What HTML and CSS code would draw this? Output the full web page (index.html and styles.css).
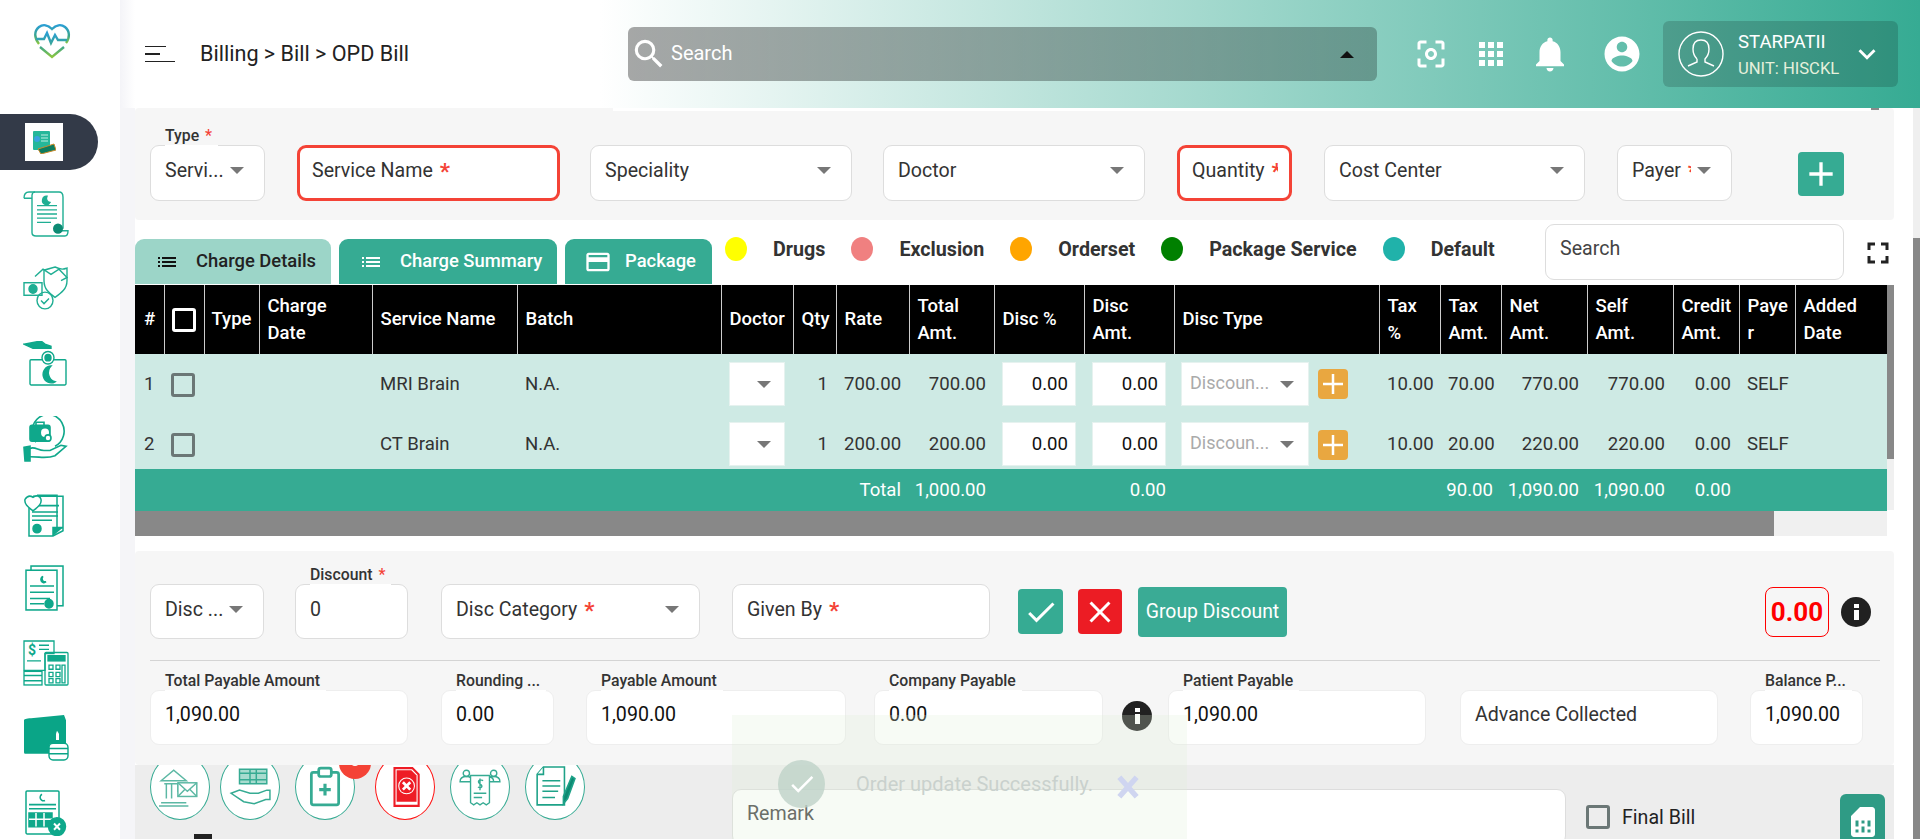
FILE: index.html
```html
<!DOCTYPE html>
<html lang="en">
<head>
<meta charset="utf-8">
<title>OPD Bill</title>
<link rel="stylesheet" href="styles.css">
</head>
<body>
<div class="app">
  <aside class="sidebar">
    <div class="logo">
      <svg width="38" height="36" viewBox="0 0 38 36" fill="none">
        <defs><linearGradient id="lg" x1="0" y1="0" x2="0" y2="1"><stop offset="0" stop-color="#2b9fd3"/><stop offset=".55" stop-color="#3aa58f"/><stop offset="1" stop-color="#8cc63f"/></linearGradient></defs>
        <path d="M6 21C1 15 1 8 6 4c4-3 9-2 13 2 4-4 9-5 13-2 5 4 5 11 1 16" stroke="url(#lg)" stroke-width="2.4"/>
        <path d="M3 16h8l3-6 4 10 4-8 3 5h9M7 24l12 10 12-10" stroke="url(#lg)" stroke-width="2.4"/>
      </svg>
    </div>
    <div class="active-item">
      <div class="active-thumb">
        <svg width="24" height="24" viewBox="0 0 24 24"><rect x="1" y="1" width="17" height="19" rx="1" fill="#25b79a"/><circle cx="5" cy="9" r="3" fill="#3aa2e0"/><path d="M9 5h7M9 8h7M9 11h7" stroke="#bfeee3"/><path d="M6 19l16-5 2 6-15 4z" fill="#0d7c5f" stroke="#c98a2b"/></svg>
      </div>
    </div>
    <div class="nav">
      <svg class="ico" preserveAspectRatio="none" viewBox="0 0 46 44" fill="none" stroke="#1fae93" stroke-width="1.4"><path d="M1 7c0-4 2-6 5-6h30c3 0 4 2 4 5v30"/><path d="M1 7h8V4c0-2 2-3 3-3M9 7v33c0 2 2 3 4 3h29c2 0 3-2 3-5H31"/><path d="M14 14h20M14 18h20M14 22h20M14 26h20M14 30h14" stroke-width="1.2"/><path d="M24 5a4 4 0 1 0 3 6 4 4 0 0 1-3-6z" fill="#1fae93"/><circle cx="35" cy="36" r="5" fill="#0d8a73" stroke="none"/></svg>
      <svg class="ico" preserveAspectRatio="none" viewBox="0 0 46 44" fill="none" stroke="#1fae93" stroke-width="1.4"><rect x="1" y="16" width="18" height="12"/><circle cx="10" cy="22" r="4" fill="#1fae93"/><path d="M12 10l8-7 8 5 8-5 8 8-6 3"/><path d="M32 1c7 3 9 2 12 1v12c0 8-6 12-12 16-6-4-11-8-11-16V4z"/><circle cx="22" cy="33" r="8"/><path d="M18 33l3 3 5-5"/></svg>
      <svg class="ico" preserveAspectRatio="none" viewBox="0 0 46 44" fill="none" stroke="#0fa88b" stroke-width="1.4"><path d="M1 3l17-3 4 3 6 2v2H10z" fill="#0fa88b"/><rect x="7" y="18" width="36" height="24" rx="1"/><circle cx="25" cy="16" r="6" fill="#fff"/><circle cx="25" cy="16" r="3" fill="#0fa88b"/><path d="M28 24a8 8 0 1 0 4 15 9 9 0 0 1-4-15z" fill="#0fa88b"/></svg>
      <svg class="ico" preserveAspectRatio="none" viewBox="0 0 46 44" fill="none" stroke="#0fa88b" stroke-width="1.6"><path d="M13 25A16 16 0 1 1 32 29"/><rect x="7" y="9" width="20" height="15" rx="2" fill="#0fa88b"/><path d="M13 9V6h8v3"/><circle cx="22" cy="16" r="4" fill="#fff" stroke="none"/><circle cx="25" cy="21" r="3" fill="#fff"/><path d="M1 30l6-1v14H2z" fill="#0fa88b"/><path d="M7 31c5-2 8 2 14 2h6l11-5 5 1-11 9c-8 3-14 1-25 1"/></svg>
      <svg class="ico" preserveAspectRatio="none" viewBox="0 0 46 44" fill="none" stroke="#0fa88b" stroke-width="1.5"><path d="M10 5h30v33l-10 5H6V16"/><path d="M30 43v-8h10"  fill="#0fa88b"/><path d="M14 4h20v32" /><path d="M16 14h20M9 20h26M9 24h26M9 28h20"/><path d="M2 8c2-3 5-4 8-2 3-2 7-2 8 2 1 5-4 8-8 11-4-3-9-6-8-11z" fill="#fff"/><circle cx="14" cy="36" r="4" fill="#0fa88b"/></svg>
      <svg class="ico" preserveAspectRatio="none" viewBox="0 0 46 44" fill="none" stroke="#0fa88b" stroke-width="1.5"><rect x="8" y="1" width="32" height="38"/><rect x="3" y="5" width="31" height="38" fill="#fff"/><path d="M20 11a3 3 0 1 0 3 5 3 3 0 0 1-3-5z" fill="#0fa88b"/><path d="M7 20h24M7 26h24M7 32h20M7 37h14"/><circle cx="26" cy="37" r="4" fill="#0fa88b"/></svg>
      <svg class="ico" preserveAspectRatio="none" viewBox="0 0 46 44" fill="none" stroke="#0fa88b" stroke-width="1.3"><path d="M1 1h30v12H22v16H1z"/><text x="5" y="14" class="dollar">$</text><path d="M16 5h10M16 9h10M4 20h14"/><rect x="1" y="30" width="18" height="13"/><path d="M1 34h18M1 39h18"/><rect x="22" y="12" width="23" height="31" rx="1"/><rect x="25" y="15" width="17" height="5" fill="#0fa88b"/><path d="M26 24h4v4h-4zM33 24h4v4h-4zM26 31h4v4h-4zM33 31h4v4h-4zM26 37h4v4h-4zM33 37h4v4h-4zM39 24h3v17h-3z"/></svg>
      <svg class="ico" preserveAspectRatio="none" viewBox="0 0 46 44"><path d="M8 3l33-3 2 5v24c-9 0-13 3-13 8H2c-1 0-1-1-1-2V5c0-1 2-2 7-2z" fill="#0aa587"/><path d="M34 15l2 3v6h-3v-6z" fill="#fff"/><rect x="26" y="27" width="19" height="16" rx="4" fill="#fff" stroke="#0aa587" stroke-width="1.4"/><path d="M26 32h19M26 37h19" stroke="#0aa587" stroke-width="1.4"/></svg>
      <svg class="ico" preserveAspectRatio="none" viewBox="0 0 46 44" fill="none" stroke="#0fa88b" stroke-width="1.5"><rect x="3" y="1" width="33" height="41" rx="1"/><path d="M19 4a3 3 0 1 0 3 6 3 3 0 0 1-3-6z" fill="#0fa88b"/><path d="M6 14h27M6 18h27"/><path d="M6 22h23v13H6z" fill="#0fa88b"/><path d="M13 22v13M21 22v13M6 28h23" stroke="#fff"/><circle cx="34" cy="35" r="8.5" fill="#0fa88b"/><path d="M31 32l6 6M37 32l-6 6" stroke="#fff" stroke-width="2"/></svg>
    </div>
  </aside>

  <main class="main">
    <header class="topbar">
      <div class="burger"><span class="b1"></span><span class="b2"></span><span class="b3"></span></div>
      <div class="crumb">Billing &gt; Bill &gt; OPD Bill</div>
      <div class="topsearch">
        <svg class="i28" viewBox="0 0 24 24" fill="#fff"><path d="M15.5 14h-.79l-.28-.27A6.471 6.471 0 0 0 16 9.5 6.5 6.5 0 1 0 9.5 16c1.61 0 3.09-.59 4.23-1.57l.27.28v.79l5 4.99L20.49 19l-4.99-5zm-6 0C7.01 14 5 11.99 5 9.5S7.01 5 9.5 5 14 7.01 14 9.5 11.99 14 9.5 14z"/></svg>
        <span class="ts-text">Search</span>
        <span class="uparrow"></span>
      </div>
      <svg class="tico t1" viewBox="0 0 24 24" fill="#fff"><path d="M5 15H3v4c0 1.1.9 2 2 2h4v-2H5v-4zM5 5h4V3H5c-1.1 0-2 .9-2 2v4h2V5zm14-2h-4v2h4v4h2V5c0-1.1-.9-2-2-2zm0 16h-4v2h4c1.1 0 2-.9 2-2v-4h-2v4zM12 8c-2.21 0-4 1.79-4 4s1.79 4 4 4 4-1.79 4-4-1.79-4-4-4zm0 6c-1.1 0-2-.9-2-2s.9-2 2-2 2 .9 2 2-.9 2-2 2z"/></svg>
      <svg class="tico t2" viewBox="0 0 24 24" fill="#fff"><path d="M4 8h4V4H4v4zm6 12h4v-4h-4v4zm-6 0h4v-4H4v4zm0-6h4v-4H4v4zm6 0h4v-4h-4v4zm6-10v4h4V4h-4zm-6 4h4V4h-4v4zm6 6h4v-4h-4v4zm0 6h4v-4h-4v4z"/></svg>
      <svg class="tico t3" viewBox="0 0 24 24" fill="#fff"><path d="M12 22c1.1 0 2-.9 2-2h-4c0 1.1.89 2 2 2zm6-6v-5c0-3.07-1.64-5.64-4.5-6.32V4c0-.83-.67-1.5-1.5-1.5s-1.5.67-1.5 1.5v.68C7.63 5.36 6 7.92 6 11v5l-2 2v1h16v-1l-2-2z"/></svg>
      <svg class="tico t4" viewBox="0 0 24 24" fill="#fff"><path d="M12 2C6.48 2 2 6.48 2 12s4.48 10 10 10 10-4.48 10-10S17.52 2 12 2zm0 3c1.66 0 3 1.34 3 3s-1.34 3-3 3-3-1.34-3-3 1.34-3 3-3zm0 14.2c-2.5 0-4.71-1.28-6-3.22.03-1.99 4-3.08 6-3.08 1.99 0 5.97 1.09 6 3.08-1.29 1.94-3.5 3.22-6 3.22z"/></svg>
      <div class="user">
        <svg class="avatar" viewBox="0 0 46 46" fill="none" stroke="#fff" stroke-width="1.4"><circle cx="23" cy="23" r="22"/><path d="M15 18c0-6 3-9 8-9s8 3 8 9c0 4-2 8-4 10v3l9 4M19 28c-2-2-4-6-4-10M19 28v3l-9 4"/></svg>
        <div class="user-txt"><div class="uname">STARPATII</div><div class="uunit">UNIT: HISCKL</div></div>
        <svg class="chev" viewBox="0 0 24 24" fill="#fff"><path d="M16.59 8.59L12 13.17 7.41 8.59 6 10l6 6 6-6z"/></svg>
      </div>
    </header>

    <div class="content">
      <section class="panel form-panel">
        <span class="strip"></span><span class="strip-thumb"></span>
        <div class="field w115"><span class="lbl">Type <b>*</b></span><span class="val">Servi...</span><span class="arrow"></span></div>
        <div class="field red w263 g32"><span class="val">Service Name <b>*</b></span></div>
        <div class="field w262 g30"><span class="val">Speciality</span><span class="arrow"></span></div>
        <div class="field w262 g31"><span class="val">Doctor</span><span class="arrow"></span></div>
        <div class="field red w115 g32"><span class="val clip">Quantity <b>*</b></span></div>
        <div class="field w261 g32"><span class="val">Cost Center</span><span class="arrow"></span></div>
        <div class="field w115 g32"><span class="val clip">Payer <b>*</b></span><span class="arrow"></span></div>
        <button class="sq add"><svg viewBox="0 0 24 24" fill="#fff"><path d="M19 13h-6v6h-2v-6H5v-2h6V5h2v6h6v2z"/></svg></button>
      </section>

      <section class="toolbar">
        <div class="tabs">
          <div class="tab tab-on"><svg viewBox="0 0 24 24" fill="#111"><path d="M3 13h2v-2H3v2zm0 4h2v-2H3v2zm0-8h2V7H3v2zm4 4h14v-2H7v2zm0 4h14v-2H7v2zM7 7v2h14V7H7z"/></svg><span>Charge Details</span></div>
          <div class="tab"><svg viewBox="0 0 24 24" fill="#fff"><path d="M3 13h2v-2H3v2zm0 4h2v-2H3v2zm0-8h2V7H3v2zm4 4h14v-2H7v2zm0 4h14v-2H7v2zM7 7v2h14V7H7z"/></svg><span>Charge Summary</span></div>
          <div class="tab"><svg class="pk" viewBox="0 0 24 24" fill="#fff"><path d="M20 4H4c-1.11 0-1.99.89-1.99 2L2 18c0 1.11.89 2 2 2h16c1.11 0 2-.89 2-2V6c0-1.11-.89-2-2-2zm0 14H4v-6h16v6zm0-10H4V6h16v2z"/></svg><span>Package</span></div>
        </div>
        <div class="legend">
          <i class="dot d-y"></i><span>Drugs</span>
          <i class="dot d-p"></i><span>Exclusion</span>
          <i class="dot d-o"></i><span>Orderset</span>
          <i class="dot d-g"></i><span>Package Service</span>
          <i class="dot d-t"></i><span>Default</span>
        </div>
        <div class="field tsearch"><span class="val">Search</span></div>
        <svg class="fs" viewBox="0 0 24 24" fill="#222"><path d="M7 14H5v5h5v-2H7v-3zm-2-4h2V7h3V5H5v5zm12 7h-3v2h5v-5h-2v3zM14 5v2h3v3h2V5h-5z"/></svg>
      </section>

      <section class="grid-wrap">
        <div class="grid-view">
          <table class="grid">
            <colgroup>
              <col class="c29"><col class="c40"><col class="c55"><col class="c113"><col class="c145"><col class="c204"><col class="c72"><col class="c43"><col class="c73"><col class="c85"><col class="c90"><col class="c90"><col class="c205"><col class="c61"><col class="c61"><col class="c86"><col class="c86"><col class="c66"><col class="c56"><col class="c92">
            </colgroup>
            <thead>
              <tr>
                <th>#</th><th><span class="chk chk-w"></span></th><th class="th-type">Type</th><th>Charge Date</th><th>Service Name</th><th>Batch</th><th>Doctor</th><th>Qty</th><th>Rate</th><th>Total Amt.</th><th>Disc %</th><th>Disc Amt.</th><th>Disc Type</th><th>Tax<br>%</th><th>Tax Amt.</th><th>Net Amt.</th><th>Self Amt.</th><th>Credit Amt.</th><th class="brk">Payer</th><th>Added Date</th>
              </tr>
            </thead>
            <tbody>
              <tr class="r1">
                <td>1</td><td><span class="chk"></span></td><td></td><td></td><td>MRI Brain</td><td>N.A.</td>
                <td class="ci"><div class="cbox sel"><span class="arrow"></span></div></td>
                <td class="n">1</td><td class="n">700.00</td><td class="n">700.00</td>
                <td class="ci"><div class="cbox num">0.00</div></td><td class="ci"><div class="cbox num">0.00</div></td>
                <td class="ci"><div class="dt"><div class="cbox dsel"><span class="ph">Discoun...</span><span class="arrow"></span></div><span class="plus"><svg viewBox="0 0 24 24" fill="#fff"><path d="M20 13h-7v7h-2v-7H4v-2h7V4h2v7h7v2z"/></svg></span></div></td>
                <td class="n">10.00</td><td class="n">70.00</td><td class="n">770.00</td><td class="n">770.00</td><td class="n">0.00</td><td>SELF</td><td></td>
              </tr>
              <tr class="r2">
                <td>2</td><td><span class="chk"></span></td><td></td><td></td><td>CT Brain</td><td>N.A.</td>
                <td class="ci"><div class="cbox sel"><span class="arrow"></span></div></td>
                <td class="n">1</td><td class="n">200.00</td><td class="n">200.00</td>
                <td class="ci"><div class="cbox num">0.00</div></td><td class="ci"><div class="cbox num">0.00</div></td>
                <td class="ci"><div class="dt"><div class="cbox dsel"><span class="ph">Discoun...</span><span class="arrow"></span></div><span class="plus"><svg viewBox="0 0 24 24" fill="#fff"><path d="M20 13h-7v7h-2v-7H4v-2h7V4h2v7h7v2z"/></svg></span></div></td>
                <td class="n">10.00</td><td class="n">20.00</td><td class="n">220.00</td><td class="n">220.00</td><td class="n">0.00</td><td>SELF</td><td></td>
              </tr>
              <tr class="tot">
                <td colspan="8"></td><td class="n">Total</td><td class="n">1,000.00</td><td></td><td class="n">0.00</td><td></td><td></td><td class="n">90.00</td><td class="n">1,090.00</td><td class="n">1,090.00</td><td class="n">0.00</td><td></td><td></td>
              </tr>
            </tbody>
          </table>
          <div class="vbar"><span></span></div>
        </div>
        <div class="hbar"><span></span></div>
      </section>

      <section class="panel lower">
        <div class="row row1">
          <div class="field w114"><span class="val">Disc ...</span><span class="arrow"></span></div>
          <div class="field w113 g31"><span class="lbl">Discount <b>*</b></span><span class="val">0</span></div>
          <div class="field w259 g33"><span class="val">Disc Category <b>*</b></span><span class="arrow"></span></div>
          <div class="field w258 g32"><span class="val">Given By <b>*</b></span></div>
          <button class="sq ok"><svg viewBox="0 0 24 24" fill="#fff"><path d="M9 16.17L4.83 12l-1.42 1.41L9 19 21 7l-1.41-1.41z"/></svg></button>
          <button class="sq no"><svg viewBox="0 0 24 24" fill="#fff"><path d="M19 6.41L17.59 5 12 10.59 6.41 5 5 6.41 10.59 12 5 17.59 6.41 19 12 13.41 17.59 19 19 17.59 13.41 12z"/></svg></button>
          <button class="group">Group Discount</button>
          <div class="redbox">0.00</div>
          <span class="info"><i></i></span>
        </div>
        <div class="divider"></div>
        <div class="row row2">
          <div class="field soft w258"><span class="lbl">Total Payable Amount</span><span class="val dark">1,090.00</span></div>
          <div class="field soft w113 g33"><span class="lbl">Rounding ...</span><span class="val dark">0.00</span></div>
          <div class="field soft w260 g32"><span class="lbl">Payable Amount</span><span class="val dark">1,090.00</span></div>
          <div class="field soft w229 g28"><span class="lbl">Company Payable</span><span class="val dark">0.00</span></div>
          <span class="info inf2"><i></i></span>
          <div class="field soft w258 g16"><span class="lbl">Patient Payable</span><span class="val dark">1,090.00</span></div>
          <div class="field soft w258 g34"><span class="val">Advance Collected</span></div>
          <div class="field soft w113 g32"><span class="lbl">Balance P...</span><span class="val dark">1,090.00</span></div>
        </div>
      </section>

      <section class="bottom">
        <div class="acts">
          <div class="circles">
            <span class="circle"><svg viewBox="0 0 40 40" fill="none" stroke="#5cb8a4" stroke-width="1.4"><path d="M2 14L14 4l12 10zM5 17h18M7 17v14M12 17v14M18 17v8M2 35h24M0 38h28"/><rect x="18" y="16" width="18" height="13" fill="#fff"/><path d="M18 16l9 8 9-8M18 29l7-7M36 29l-7-7"/></svg></span>
            <span class="circle c2"><svg viewBox="0 0 40 40" fill="none" stroke="#36ab93" stroke-width="1.4"><path d="M10 3h26v14H10z" fill="#a8dccf"/><path d="M20 3v14M26 3v14M10 7h26M10 13h26"/><path d="M2 26l8-3 10 3h8l8-3h3v9h-4l-11 4-10-2-12-8z" fill="#fff"/></svg></span>
            <span class="circle c3"><svg viewBox="0 0 40 40" fill="none" stroke="#36ab93" stroke-width="2.6"><rect x="7" y="6" width="26" height="31" rx="2"/><rect x="14" y="2" width="12" height="8" rx="2" fill="#fff"/><path d="M20 17v11M14.500 22.500h11" stroke-width="3"/></svg><em class="badge"></em></span>
            <span class="circle c4 cred"><svg viewBox="0 0 40 40" fill="none"><path d="M10 2h17l6 6v30H10z" fill="#fff" stroke="#ee1c25" stroke-width="2"/><path d="M12 4h14l5 5v25H12z" fill="#ee1c25"/><circle cx="21.500" cy="19" r="8" fill="#fff"/><circle cx="21.500" cy="19" r="7" fill="#ee1c25"/><path d="M18 15.500l7 7M25 15.500l-7 7" stroke="#fff" stroke-width="2.6"/></svg></span>
            <span class="circle c5"><svg viewBox="0 0 40 40" fill="none" stroke="#36ab93" stroke-width="1.3"><circle cx="7" cy="7" r="3"/><path d="M1 15c0-4 3-5 6-5s6 1 6 5zM33 15c0-4-3-5-6-5"/><circle cx="33" cy="7" r="3"/><path d="M27 15c0-4 3-5 6-5s6 1 6 5z"/><path d="M11 9h18v26l-3 2-3-2-3 2-3-2-3 2-3-2z" fill="#fff"/><path d="M14 26h12M14 30h8"/><path d="M23 14c-4-2-6 1-3 3s2 5-2 3M20 12v11"/></svg></span>
            <span class="circle c6"><svg viewBox="0 0 40 40" fill="none" stroke="#1ea288" stroke-width="1.5"><path d="M9 1h20v36H3V8z"/><path d="M9 1v7H3" fill="#fff"/><path d="M8 14h17M8 19h17M8 24h15M8 30h12"/><path d="M36 10l3 2-7 19-4 5 0-7z" fill="#0d8a73"/></svg></span>
          </div>
          <span class="stub"></span>
        </div>
        <div class="field remark"><span class="val">Remark</span></div>
        <label class="final"><span class="chk"></span><span>Final Bill</span></label>
        <button class="sq sim"><svg viewBox="0 0 24 24" fill="#fff"><path d="M19.99 4c0-1.1-.89-2-1.99-2h-8L4 8v12c0 1.1.9 2 2 2h12c1.1 0 2-.9 2-2l-.01-16zM9 19H7v-2h2v2zm8 0h-2v-2h2v2zm-8-4H7v-4h2v4zm4 4h-2v-4h2v4zm0-6h-2v-2h2v2zm4 2h-2v-4h2v4z"/></svg></button>
      </section>
    </div>
  </main>
</div>

<div class="pagebar"><span></span></div>

<div class="toast">
  <span class="t-ok"><svg viewBox="0 0 24 24" fill="#fff"><path d="M9 16.17L4.83 12l-1.42 1.41L9 19 21 7l-1.41-1.41z"/></svg></span>
  <span class="t-msg">Order update Successfully.</span>
  <svg class="t-x" viewBox="0 0 24 24" fill="none" stroke="#cfd5f0" stroke-width="5"><path d="M4 3l16 18M20 3L4 21"/></svg>
</div>
</body>
</html>
```
FILE: styles.css
```css
* { box-sizing: border-box; }
html, body { margin: 0; height: 839px; overflow: hidden; background: #fff; }
body { font-family: Roboto, "Liberation Sans", sans-serif; font-size: 19.6px; color: #333; position: relative; }
button { font-family: inherit; border: 0; padding: 0; }
.app { display: flex; height: 839px; }

/* sidebar */
.sidebar { width: 120px; flex: none; background: #fff; }
.logo { height: 114px; padding: 23px 0 0 33px; }
.logo svg { display: block; }
.active-item { width: 98px; height: 56px; background: #333a48; border-radius: 0 28px 28px 0; padding: 9px 0 0 25px; }
.active-thumb { width: 38px; height: 38px; background: #fff; display: flex; align-items: center; justify-content: center; }
.nav { display: flex; flex-direction: column; gap: 28.9px; padding: 21px 0 0 23px; }
.ico { width: 46px; height: 46px; flex: none; display: block; }
.dollar { font: 700 14px Roboto, sans-serif; fill: #0fa88b; stroke: none; }

/* main */
.main { flex: 1; min-width: 0; }
.topbar { height: 108px; display: flex; align-items: center; background: linear-gradient(to right, #f4f4f8, #fff 15px, #fff 480px, #36ab93 100%); }
.burger { width: 30px; margin-left: 25px; display: flex; flex-direction: column; gap: 6px; }
.burger span { display: block; background: #222; }
.b1 { width: 21px; height: 1px; }
.b2 { width: 15px; height: 2px; }
.b3 { width: 30px; height: 1px; }
.crumb { width: 428px; margin-left: 25px; font-size: 21.6px; color: #222; margin-top: -2px; }
.topsearch { width: 749px; height: 54px; border-radius: 6px; background: linear-gradient(to right, rgba(0,0,0,.34), rgba(0,0,0,.26)); display: flex; align-items: center; padding-left: 2px; }
.i28 { width: 38px; height: 38px; flex: none; }
.ts-text { color: #fff; margin-left: 3px; flex: 1; font-size: 20px; margin-top: -2px; }
.uparrow { width: 0; height: 0; border: 7px solid transparent; border-top: 0; border-bottom: 7px solid #111; margin-right: 23px; }
.tico { flex: none; height: 36px; width: 36px; }
.t1 { margin-left: 36px; }
.t2 { margin-left: 24px; }
.t3 { margin-left: 20px; height: 42px; width: 42px; }
.t4 { margin-left: 30px; height: 42px; width: 42px; }
.user { width: 235px; height: 66px; margin-left: 20px; border-radius: 6px; background: rgba(0,0,0,.16); display: flex; align-items: center; padding-left: 15px; }
.avatar { width: 46px; height: 46px; flex: none; }
.user-txt { margin-left: 14px; width: 112px; flex: none; }
.uname { color: #fff; font-size: 18.6px; line-height: 22px; margin-bottom: 7px; white-space: nowrap; }
.uunit { color: #e6f0dc; font-size: 16.6px; line-height: 18px; white-space: nowrap; }
.chev { width: 34px; height: 34px; margin-left: 0; flex: none; }

.content { border-left: 15px solid #f5f5f8; width: 1774px; height: 731px; position: relative; }
.panel { background: #f6f6f6; border-radius: 4px; }
.form-panel { height: 112px; display: flex; align-items: flex-start; padding: 37px 0 0 15px; position: relative; }
.strip { position: absolute; left: 478px; top: 0; width: 1258px; height: 3px; background: #fff; }
.strip-thumb { position: absolute; left: 1736px; top: 0; width: 8px; height: 2px; background: #8a8a8a; }

/* fields */
.field { position: relative; height: 56px; background: #fff; border: 1px solid #ddd; border-radius: 9px; padding: 13px 20px 0 14px; display: flex; align-items: flex-start; flex: none; line-height: 24px; white-space: nowrap; }
.field.red { border: 3px solid #f44336; padding: 11px 11px 0 12px; }
.field.soft { border-color: #eee; padding-top: 12px; height: 55px; }
.field b { color: #f44336; font-weight: 700; font-size: 1.15em; line-height: 20px; margin-left: 2px; vertical-align: -2px; }
.val { flex: 1; min-width: 0; color: #333; }
.val.clip { overflow: hidden; }
.val.dark { color: #111; }
.arrow { flex: none; width: 0; height: 0; border: 7px solid transparent; border-bottom: 0; border-top: 7px solid #777; margin-top: 8px; margin-left: 6px; }
.lbl { position: absolute; left: 14px; top: -19px; font-size: 15.8px; font-weight: 500; line-height: 18px; color: #333; background: linear-gradient(to bottom, transparent 18px, #fff 18px); padding-right: 6px; padding-bottom: 1px; }
.field .lbl b { font-weight: 500; font-size: 1em; vertical-align: baseline; line-height: 18px; }
.w113 { width: 113px; } .w114 { width: 114px; } .w115 { width: 115px; }
.w229 { width: 229px; } .w258 { width: 258px; } .w259 { width: 259px; } .w260 { width: 260px; }
.w261 { width: 261px; } .w262 { width: 262px; } .w263 { width: 263px; }
.g16 { margin-left: 16px; } .g28 { margin-left: 28px; } .g30 { margin-left: 30px; } .g31 { margin-left: 31px; } .g32 { margin-left: 32px; } .g33 { margin-left: 33px; } .g34 { margin-left: 34px; }

.sq { flex: none; border-radius: 4px; display: flex; align-items: center; justify-content: center; background: #36ab93; }
.add { width: 46px; height: 44px; margin: 7px 0 0 66px; }
.add svg { width: 40px; height: 40px; }

/* toolbar */
.toolbar { height: 65px; display: flex; align-items: flex-start; }
.tabs { display: flex; gap: 8px; margin-top: 19px; }
.tab { height: 45px; display: flex; align-items: center; padding-left: 20px; background: #36ab93; border-radius: 9px 9px 0 0; color: #fff; font-weight: 500; font-size: 18.4px; }
.tab svg { width: 24px; height: 24px; flex: none; }
.tab span { margin-left: 17px; white-space: nowrap; margin-top: -2px; }
.tab:nth-child(1) { width: 196px; }
.tab:nth-child(2) { width: 218px; }
.tab:nth-child(3) { width: 147px; }
.tab-on { background: #9cd5c8; color: #222; }
.tab svg.pk { width: 28px; height: 28px; margin-left: -1px; }
.tab svg.pk + span { margin-left: 13px; }
.legend { display: flex; align-items: center; gap: 26px; margin: 17px 0 0 13px; height: 24px; font-weight: 700; font-size: 19.7px; color: #333; white-space: nowrap; }
.dot { width: 22px; height: 24px; border-radius: 50%; flex: none; }
.d-y { background: #ffff00; } .d-p { background: #f08080; } .d-o { background: #ffa500; } .d-g { background: #008000; } .d-t { background: #20b2aa; }
.tsearch { width: 299px; height: 56px; margin: 4px 0 0 auto; padding-top: 12px; }
.tsearch .val { color: #444; }
.fs { width: 36px; height: 36px; margin: 15px -2px 0 16px; flex: none; }

/* grid */
.grid-wrap { height: 251px; }
.grid-view { display: flex; height: 226px; overflow: hidden; }
.grid { width: 1752px; flex: none; table-layout: fixed; border-collapse: collapse; font-size: 18.6px; color: #333; }
.c29{width:29px}.c40{width:40px}.c55{width:55px}.c113{width:113px}.c145{width:145px}.c204{width:204px}.c72{width:72px}.c43{width:43px}.c73{width:73px}.c85{width:85px}.c90{width:90px}.c205{width:205px}.c61{width:61px}.c86{width:86px}.c66{width:66px}.c56{width:56px}.c92{width:92px}
.grid th { height: 69px; background: #000; color: #fff; font-weight: 500; font-size: 18.5px; line-height: 27px; text-align: left; padding: 0 4px 0 8px; border-right: 1px solid #ccc; }
.grid th:first-child { padding-left: 9px; }
.grid th:last-child { border-right: 0; }
.grid .th-type { padding-left: 7px; }
.grid .brk { word-break: break-all; }
.grid td { background: #ceeae4; padding: 8px 8px 0; line-height: 44px; vertical-align: top; white-space: nowrap; }
.grid td:first-child { padding-left: 9px; }
.r1 td { height: 60px; }
.r2 td { height: 55px; }
.grid .n { text-align: right; }
.grid .ci { padding-left: 8px; padding-right: 8px; }
.cbox { height: 44px; background: #fff; border: 1px solid #e6f2ef; color: #111; }
.sel { display: flex; align-items: center; justify-content: flex-end; padding-right: 13px; }
.cbox .arrow { margin: 0; }
.num { text-align: right; padding-right: 7px; line-height: 42px; }
.dt { display: flex; gap: 9px; align-items: center; margin-left: -1px; }
.dsel { width: 128px; flex: none; display: flex; align-items: center; padding: 0 14px 0 8px; justify-content: space-between; }
.ph { color: #aaa; line-height: 40px; margin-top: -2px; font-size: 18px; }
.plus { width: 30px; height: 30px; border-radius: 4px; background: #e9a740; display: flex; align-items: center; justify-content: center; flex: none; }
.plus svg { width: 30px; height: 30px; }
.r2 .plus { margin-top: 1px; }
.grid .tot td { background: #36ab93; color: #fff; height: 42px; padding: 0 8px 0 0; line-height: 42px; font-size: 18.6px; }
.chk { display: inline-block; width: 24px; height: 24px; border: 3px solid #6b7776; border-radius: 3px; vertical-align: middle; }
.grid td .chk { margin-left: -1px; }
.chk-w { border-color: #fff; margin-left: -1px; }
.vbar { width: 7px; flex: none; background: #f0f0f0; height: 226px; margin-top: -1px; }
.vbar span { display: block; height: 175px; background: #888; }
.hbar { width: 1752px; height: 25px; background: #f0f0f0; }
.hbar span { display: block; height: 25px; width: 1639px; background: #888; }

/* lower */
.lower { position: relative; z-index: 1; height: 214px; margin-top: 15px; padding: 33px 0 0 15px; }
.row { display: flex; align-items: flex-start; }
.row1 { height: 55px; align-items: center; }
.row1 .field { height: 55px; }
.ok { width: 45px; height: 45px; margin-left: 28px; }
.ok svg, .no svg { width: 36px; height: 36px; }
.no { width: 44px; height: 45px; margin-left: 15px; background: #ec1c24; }
.group { width: 149px; height: 50px; margin-left: 16px; border-radius: 4px; background: #3aab95; color: #fff; font-size: 19.4px; }
.redbox { width: 64px; height: 50px; margin-left: 478px; border: 1px solid #f00; border-radius: 8px; color: #f00; font-weight: 700; font-size: 26px; display: flex; align-items: center; justify-content: center; }
.info { width: 30px; height: 30px; flex: none; border-radius: 50%; background: #212121; margin-left: 12px; display: flex; align-items: center; justify-content: center; }
.info i { width: 5px; height: 16px; display: block; background: linear-gradient(to bottom, #fff 4px, transparent 4px, transparent 6px, #fff 6px); }
.inf2 { margin: 11px 0 0 19px; }
.divider { height: 1px; background: #d4d4d4; margin: 21px 14px 29px 0; }
.row2 { height: 55px; }

/* bottom */
.bottom { height: 74px; background: #ededed; display: flex; align-items: flex-start; overflow: hidden; position: relative; }
.acts { width: 597px; flex: none; padding-left: 15px; }
.circles { display: flex; margin-top: -11px; }
.circle { position: relative; width: 60px; height: 66px; flex: none; background: #fff; border: 1px solid #36ab93; border-radius: 50%; display: flex; align-items: center; justify-content: center; }
.circle svg { width: 42px; height: 42px; }
.c2 { margin-left: 10px; } .c3 { margin-left: 15px; } .c4 { margin-left: 20px; } .c5 { margin-left: 15px; } .c6 { margin-left: 15px; }
.cred { border-color: #f11; }
.badge { position: absolute; left: 43px; top: -8px; width: 32px; height: 32px; border-radius: 50%; background: #f44336; }
.badge::after { content: ""; position: absolute; left: 12px; top: 13px; width: 8px; height: 6px; background: #fff; border-radius: 0 0 4px 4px; }
.stub { display: block; width: 18px; height: 6px; background: #222; margin: 14px 0 0 44px; }
.remark { width: 834px; margin-top: 24px; padding-top: 12px; }
.remark .val { color: #444; }
.final { display: flex; align-items: center; gap: 12px; margin: 40px 0 0 20px; color: #222; white-space: nowrap; width: 254px; flex: none; }
.sim { width: 45px; height: 56px; margin-top: 29px; border-radius: 6px; background: #2f9b85; }
.sim svg { width: 36px; height: 36px; }

/* page scrollbar */
.pagebar { position: absolute; right: 0; top: 108px; width: 7px; height: 731px; background: #efefef; }
.pagebar span { display: block; margin-top: 130px; height: 601px; background: #888; }

/* toast */
.toast { position: absolute; left: 732px; top: 715px; width: 455px; height: 124px; background: rgba(223,240,216,.25); z-index: 5; display: flex; align-items: flex-start; padding: 45px 0 0 46px; }
.t-ok { width: 47px; height: 48px; flex: none; border-radius: 50%; background: rgba(190,210,200,.8); display: flex; align-items: center; justify-content: center; }
.t-ok svg { width: 30px; height: 30px; }
.t-msg { margin: 12px 0 0 31px; color: #c9d1cd; white-space: nowrap; font-size: 20px; }
.t-x { width: 26px; height: 30px; margin: 12px 0 0 22px; flex: none; }
```
